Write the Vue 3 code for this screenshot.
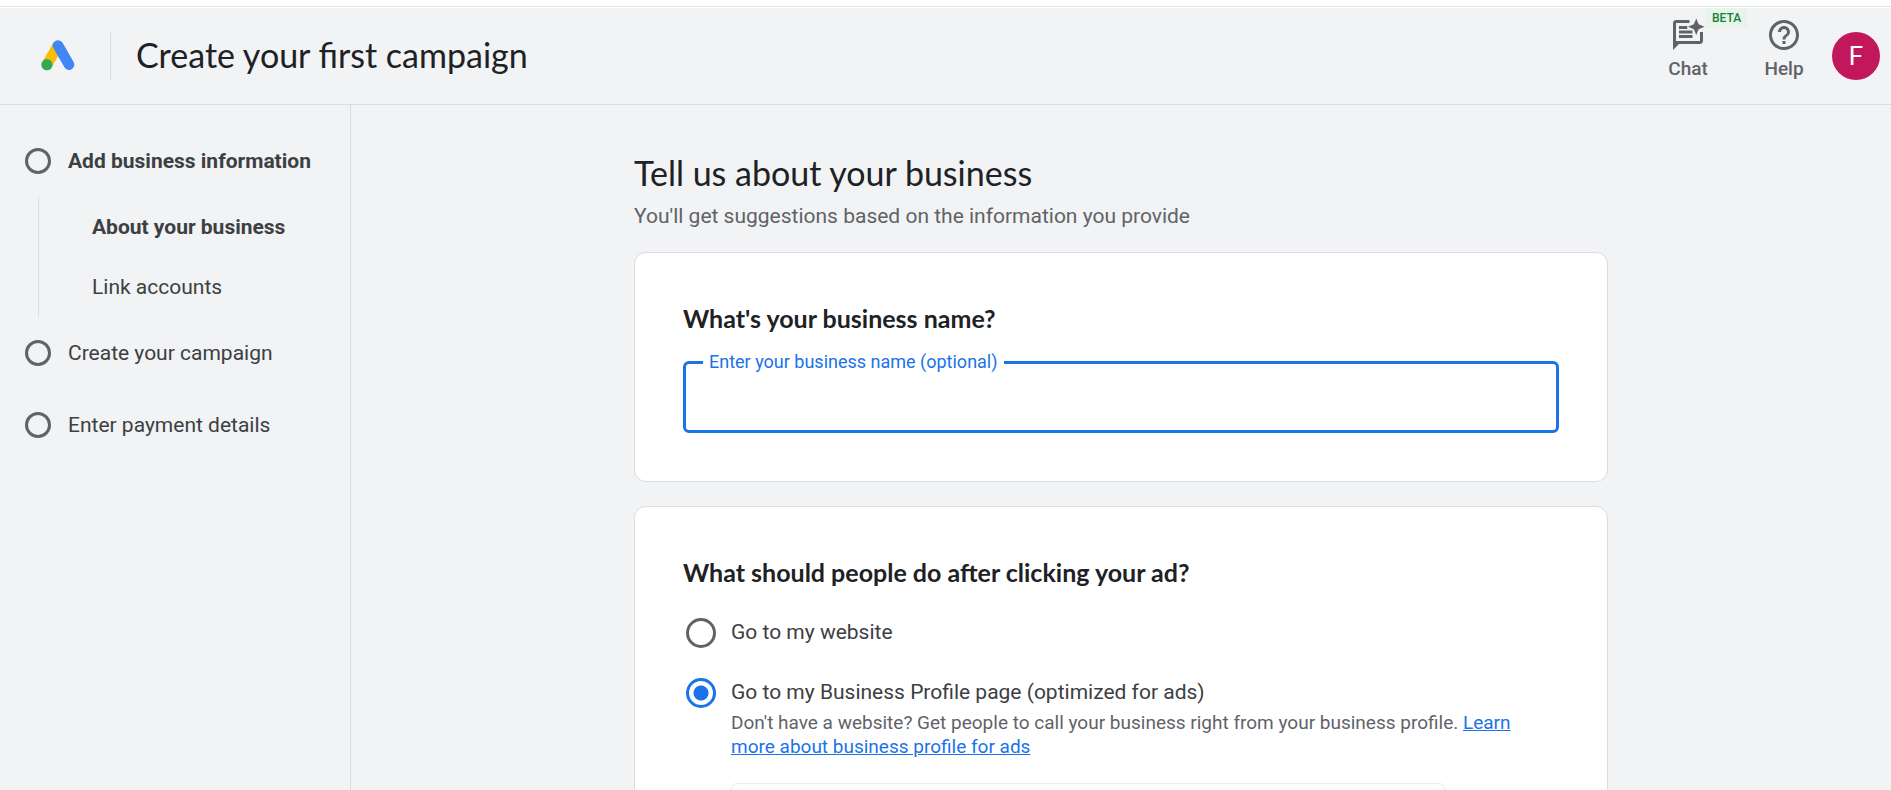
<template>
  <div class="page">
    <div class="top-strip"></div>
    <header class="header">
      <a class="logo" href="#" aria-label="Home">
        <svg viewBox="0 0 36 36" width="36" height="36">
          <path d="M18 7.500 L7 26.500" stroke="#fbbc04" stroke-width="10.600" />
          <path d="M18 7.500 L29 26.600" stroke="#4285f4" stroke-width="10.600" stroke-linecap="round" />
          <circle cx="6.900" cy="26.700" r="5.600" fill="#34a853" />
        </svg>
      </a>
      <h1 class="title">Create your first campaign</h1>
      <nav class="actions">
        <button class="action" type="button">
          <svg viewBox="0 0 24 24" width="36" height="36" fill="currentColor">
            <path d="M4 2C2.900 2 2 2.900 2 4V22L6 18H20C21.100 18 22 17.100 22 16V10H20V16H4V4H13V2ZM6 6H11.500V8H6ZM6 9H15V11H6ZM6 12H15V14H6Z" />
            <path d="M17.500 1L19.100 4.900L23 6.500L19.100 8.100L17.500 12L15.900 8.100L12 6.500L15.900 4.900Z" />
          </svg>
          <span>Chat</span>
          <span class="beta">BETA</span>
        </button>
        <button class="action" type="button">
          <svg viewBox="0 0 24 24" width="36" height="36" fill="currentColor">
            <path d="M11 18h2v-2h-2v2zm1-16C6.480 2 2 6.480 2 12s4.480 10 10 10 10-4.480 10-10S17.520 2 12 2zm0 18c-4.410 0-8-3.590-8-8s3.590-8 8-8 8 3.590 8 8-3.590 8-8 8zm0-14c-2.210 0-4 1.790-4 4h2c0-1.100.9-2 2-2s2 .9 2 2c0 2-3 1.750-3 5h2c0-2.250 3-2.500 3-5 0-2.210-1.790-4-4-4z" />
          </svg>
          <span>Help</span>
        </button>
        <button class="avatar" type="button" aria-label="Account">F</button>
      </nav>
    </header>

    <div class="body">
      <aside class="sidebar">
        <ul class="steps">
          <li v-for="step in steps" :key="step.label">
            <a class="step" :class="{ active: step.active }" href="#">
              <span class="step-circle"></span>
              {{ step.label }}
            </a>
            <ul v-if="step.children" class="substeps">
              <li v-for="child in step.children" :key="child.label">
                <a class="substep" :class="{ active: child.active }" href="#">{{ child.label }}</a>
              </li>
            </ul>
          </li>
        </ul>
      </aside>

      <main class="main">
        <div class="content">
          <h2 class="heading">Tell us about your business</h2>
          <p class="subheading">You'll get suggestions based on the information you provide</p>

          <section class="card">
            <h3 class="question">What's your business name?</h3>
            <div class="field">
              <input id="business-name" v-model="businessName" type="text" autocomplete="off" />
              <label for="business-name">Enter your business name (optional)</label>
            </div>
          </section>

          <section class="card">
            <h3 class="question">What should people do after clicking your ad?</h3>
            <div class="options">
              <div class="option">
                <input id="goal-website" v-model="goal" type="radio" name="goal" value="website" />
                <div class="option-text">
                  <label for="goal-website">Go to my website</label>
                </div>
              </div>
              <div class="option">
                <input id="goal-profile" v-model="goal" type="radio" name="goal" value="profile" />
                <div class="option-text">
                  <label for="goal-profile">Go to my Business Profile page (optimized for ads)</label>
                  <p class="hint">
                    Don't have a website? Get people to call your business right from your business profile.
                    <a href="#">Learn more about business profile for ads</a>
                  </p>
                  <div class="profile-box"></div>
                </div>
              </div>
            </div>
          </section>
        </div>
      </main>
    </div>
  </div>
</template>

<script setup>
import { ref } from 'vue'

const businessName = ref('')
const goal = ref('profile')

const steps = [
  {
    label: 'Add business information',
    active: true,
    children: [
      { label: 'About your business', active: true },
      { label: 'Link accounts' }
    ]
  },
  { label: 'Create your campaign' },
  { label: 'Enter payment details' }
]
</script>

<style>
body {
  margin: 0;
  background: #f1f3f4;
}
</style>

<style scoped>
* {
  box-sizing: border-box;
}

.page {
  display: flex;
  flex-direction: column;
  height: 100vh;
  overflow: hidden;
  background: #f1f3f4;
  color: #3c4043;
  font-family: Roboto, "Liberation Sans", sans-serif;
  font-size: 21px;
  line-height: 30px;
}

h1, h2, h3, p, ul {
  margin: 0;
  padding: 0;
}

ul {
  list-style: none;
}

button {
  padding: 0;
  border: 0;
  background: none;
  font-family: inherit;
  cursor: pointer;
}

.top-strip {
  flex: none;
  height: 8px;
  background: linear-gradient(#e1e4db, #e1e4db) 0 6px / 100% 1px no-repeat #fff;
}

.header {
  display: flex;
  flex: none;
  align-items: center;
  height: 97px;
  border-bottom: 1px solid #dadce0;
}

.logo {
  display: flex;
  align-items: center;
  height: 48px;
  padding: 0 34px 0 40px;
  border-right: 1px solid #dadce0;
}

.title,
.heading {
  color: #202124;
  font-family: Lato, sans-serif;
  font-size: 34px;
  font-weight: 400;
  line-height: 40px;
}

.title {
  flex: 1;
  padding: 0 0 2px 25px;
}

.actions {
  display: flex;
  align-items: center;
  padding-right: 11px;
}

.action {
  position: relative;
  display: flex;
  flex-direction: column;
  align-items: center;
  width: 96px;
  height: 78px;
  color: #5f6368;
  font-size: 19px;
  font-weight: 500;
  line-height: 32px;
}

.beta {
  position: absolute;
  top: -9px;
  left: 66px;
  padding: 0 6px;
  background: #e6f4ea;
  color: #188038;
  font-size: 12px;
  line-height: 20px;
}

.avatar {
  width: 48px;
  height: 48px;
  border-radius: 50%;
  background: #c2185b;
  color: #fff;
  font-size: 26px;
}

.body {
  display: flex;
  flex: 1;
  min-height: 0;
}

.sidebar {
  flex: none;
  width: 351px;
  padding-top: 20px;
  border-right: 1px solid #dadce0;
}

.step,
.substep {
  display: flex;
  align-items: center;
  color: #3c4043;
  text-decoration: none;
}

.step {
  gap: 17px;
  height: 72px;
  padding-left: 25px;
}

.step-circle {
  width: 26px;
  height: 26px;
  border: 3px solid #5f6368;
  border-radius: 50%;
}

.substeps {
  margin-left: 38px;
  border-left: 1px solid #dadce0;
}

.substep {
  height: 60px;
  padding-left: 53px;
}

.active {
  font-weight: 700;
}

.main {
  flex: 1;
  padding: 48px 24px;
}

.content {
  max-width: 974px;
  margin: 0 auto;
}

.subheading {
  margin: 8px 0 21px;
  color: #5f6368;
}

.card {
  margin-bottom: 24px;
  padding: 48px;
  border: 1px solid #dadce0;
  border-radius: 12px;
  background: #fff;
}

.question {
  margin-bottom: 26px;
  color: #202124;
  font-family: Lato, sans-serif;
  font-size: 25px;
  font-weight: 700;
  line-height: 34px;
}

.field {
  position: relative;
}

.field input {
  display: block;
  width: 100%;
  height: 72px;
  padding: 0 21px;
  border: 3px solid #1a73e8;
  border-radius: 6px;
  outline: none;
  background: #fff;
  color: #3c4043;
  font-family: inherit;
  font-size: 21px;
}

.field label {
  position: absolute;
  top: -11px;
  left: 20px;
  padding: 0 6px;
  background: #fff;
  color: #1a73e8;
  font-size: 18px;
  line-height: 24px;
}

.options {
  display: flex;
  flex-direction: column;
  gap: 27px;
}

.option {
  display: flex;
  gap: 15px;
  padding-left: 3px;
}

.option input {
  flex: none;
  width: 30px;
  height: 30px;
  margin: 3px 0 0;
  border: 3px solid #5f6368;
  border-radius: 50%;
  appearance: none;
  background: #fff;
}

.option input:checked {
  border-color: #1a73e8;
  background: radial-gradient(circle, #1a73e8 7px, #fff 8px);
}

.option-text {
  flex: 1;
  padding-top: 2px;
}

.hint {
  max-width: 800px;
  margin-top: 4px;
  color: #5f6368;
  font-size: 19px;
  line-height: 24px;
}

.hint a {
  color: #1a73e8;
}

.profile-box {
  max-width: 714px;
  height: 120px;
  margin-top: 24px;
  border: 1px solid #e8eaed;
  border-radius: 6px;
}
</style>
